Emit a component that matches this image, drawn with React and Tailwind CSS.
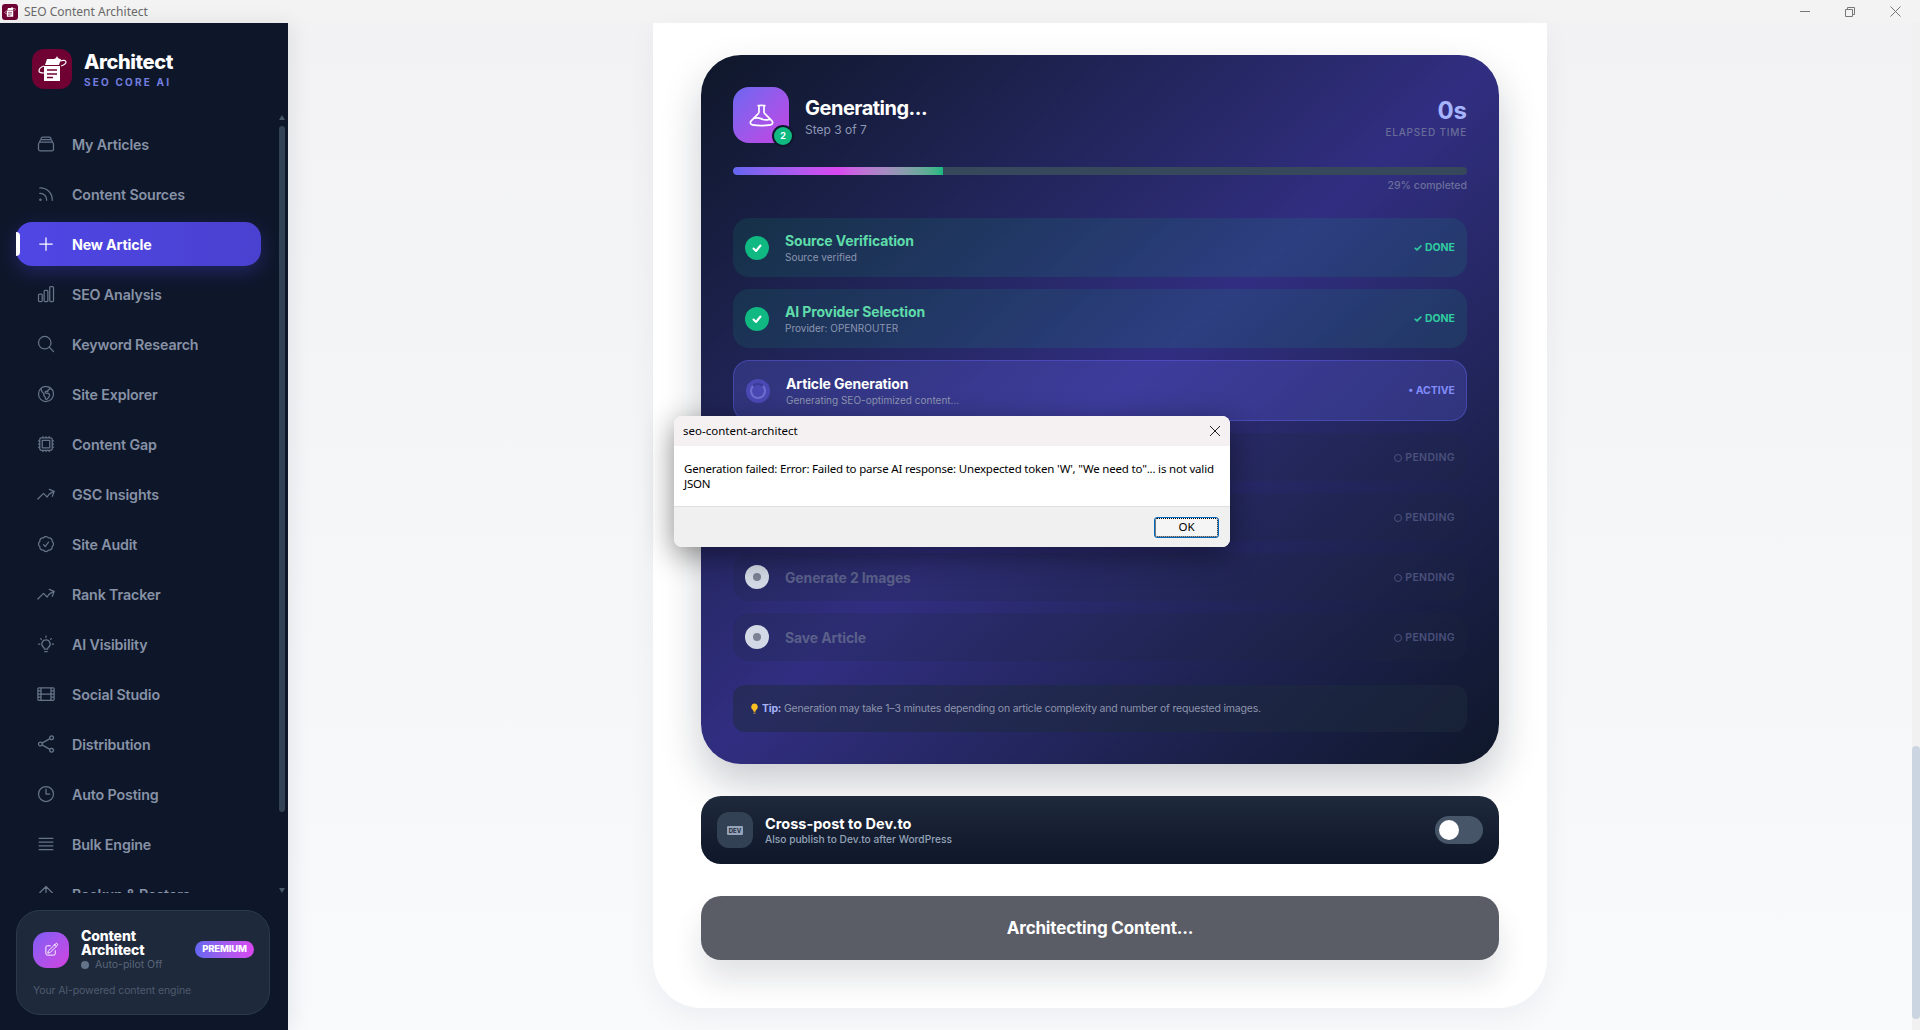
import React from 'react';
import {
  HiOutlineRectangleStack, HiOutlineRss, HiOutlinePlus, HiOutlineChartBar, HiOutlineMagnifyingGlass,
  HiOutlineGlobeAmericas, HiOutlineCpuChip, HiOutlineArrowTrendingUp, HiOutlineCheckBadge,
  HiOutlineFilm, HiOutlineShare, HiOutlineClock, HiOutlineBars4, HiOutlineArrowUp,
  HiOutlinePencilSquare, HiOutlineBeaker, HiMiniLightBulb,
} from 'react-icons/hi2';

const font = "font-['Inter','Liberation_Sans',sans-serif]";

function BulbRays({ className }) {
  return (
    <svg viewBox="0 0 24 24" className={className} fill="none" stroke="currentColor" strokeWidth="1.5" strokeLinecap="round" strokeLinejoin="round">
      <path d="M12 7a5 5 0 0 0-3 9c.7.6 1 1.200 1 2h4c0-.8.3-1.400 1-2a5 5 0 0 0-3-9z" />
      <path d="M10.500 21h3M12 2.500v1.500M4.500 12H3M21 12h-1.500M6.500 6.500l-1-1M17.500 6.500l1-1" />
    </svg>
  );
}

const navItems = [
  { label: 'My Articles', icon: HiOutlineRectangleStack },
  { label: 'Content Sources', icon: HiOutlineRss },
  { label: 'New Article', icon: HiOutlinePlus, active: true },
  { label: 'SEO Analysis', icon: HiOutlineChartBar },
  { label: 'Keyword Research', icon: HiOutlineMagnifyingGlass },
  { label: 'Site Explorer', icon: HiOutlineGlobeAmericas },
  { label: 'Content Gap', icon: HiOutlineCpuChip },
  { label: 'GSC Insights', icon: HiOutlineArrowTrendingUp },
  { label: 'Site Audit', icon: HiOutlineCheckBadge },
  { label: 'Rank Tracker', icon: HiOutlineArrowTrendingUp },
  { label: 'AI Visibility', icon: BulbRays },
  { label: 'Social Studio', icon: HiOutlineFilm },
  { label: 'Distribution', icon: HiOutlineShare },
  { label: 'Auto Posting', icon: HiOutlineClock },
  { label: 'Bulk Engine', icon: HiOutlineBars4 },
  { label: 'Backup & Restore', icon: HiOutlineArrowUp },
];

function LogoMark({ className }) {
  return (
    <div className={`flex items-center justify-center bg-[#6f0233] ${className}`}>
      <svg viewBox="0 0 40 40" className="w-full h-full" fill="none">
        <path d="M15 10h14l-2 6H13z" fill="#fff" />
        <path d="M12 17h16v15H12z" fill="#fff" />
        <path d="M15 21h10M15 25h10M15 28.5h6" stroke="#6f0233" strokeWidth="1.4" />
        <path d="M12 17c-3 1-5 3-5 5 0 1.5 2 2 5 2M28 12c3-1 6-1 6 1 0 1.500-2 3-5 4" stroke="#fff" strokeWidth="1.2" />
        <path d="M25 7l1 2 2 1-2 1-1 2-1-2-2-1 2-1z" fill="#fff" />
      </svg>
    </div>
  );
}

function NavLink({ item }) {
  const Icon = item.icon;
  return (
    <div
      className={`relative flex items-center h-11 w-[245px] shrink-0 rounded-2xl pl-5 gap-4 ${
        item.active
          ? 'bg-linear-to-r from-[#4f46e5] to-[#4a41d0] text-white shadow-[0_6px_18px_rgba(79,70,229,0.3)]'
          : 'text-[#8792a6]'
      }`}
    >
      {item.active && <span className="absolute left-0 top-[10px] h-6 w-1 rounded-r bg-white" />}
      <Icon className={`w-5 h-5 shrink-0 ${item.active ? 'text-white' : 'text-[#667388]'}`} />
      <span className={`pt-px text-[14.250px] tracking-[-0.01em] ${item.active ? 'font-bold' : 'font-semibold'}`}>{item.label}</span>
    </div>
  );
}

function Sidebar() {
  return (
    <aside className="w-[288px] shrink-0 flex flex-col bg-[#0e172a] shadow-[4px_0_20px_rgba(15,23,42,0.08)] z-10">
      <div className="h-[90px] shrink-0 pl-8 pt-[26px] flex items-start gap-3">
        <LogoMark className="w-10 h-10 rounded-xl overflow-hidden" />
        <div className="flex flex-col">
          <span className="text-[20px] leading-[26px] font-extrabold text-white tracking-[-0.02em]">Architect</span>
          <span className="text-[10px] leading-[14px] font-bold tracking-[0.22em] text-[#737ee0]">SEO CORE AI</span>
        </div>
      </div>

      <div className="relative flex-1 min-h-0 overflow-hidden">
        <nav className="flex flex-col gap-[6px] pl-4 pt-[9px]">
          {navItems.map((item) => (
            <NavLink key={item.label} item={item} />
          ))}
        </nav>
        {/* scrollbar */}
        <div className="absolute left-[279px] top-[2px] w-0 h-0 border-x-[3px] border-x-transparent border-b-[5px] border-b-[#475569]" />
        <div className="absolute left-[279px] top-[13px] h-[686px] w-[6px] rounded-full bg-[#334155]" />
        <div className="absolute left-[279px] top-[775px] w-0 h-0 border-x-[3px] border-x-transparent border-t-[5px] border-t-[#475569]" />
      </div>

      <div className="mt-[17px] mb-[15px] ml-4 w-[254px] h-[105px] rounded-3xl border border-[#2c3a4f] bg-[#1e293b] pl-4 pr-[15px] pt-4">
        <div className="flex items-center h-[45px]">
          <div className="w-9 h-9 shrink-0 rounded-[14px] bg-linear-to-br from-[#7c5cf6] to-[#d13fe0] flex items-center justify-center">
            <HiOutlinePencilSquare className="w-[15px] h-[15px] text-white" />
          </div>
          <div className="ml-3 pt-[2px] flex flex-col">
            <span className="text-[14px] leading-[14px] font-extrabold text-white tracking-[-0.01em]">
              Content
              <br />
              Architect
            </span>
            <span className="flex items-center gap-[6px] h-[15px] text-[10.500px] leading-[15px] text-[#596579]">
              <span className="w-2 h-2 rounded-full bg-[#64748b]" />
              Auto-pilot Off
            </span>
          </div>
          <span className="ml-auto flex items-center justify-center w-[59px] h-[17px] rounded-full bg-linear-to-r from-[#6366f1] to-[#d946ef] text-[9.500px] font-extrabold tracking-[-0.02em] text-white">
            PREMIUM
          </span>
        </div>
        <p className="mt-[11px] text-[10.500px] leading-4 text-[#4f5b6f] tracking-[-0.01em]">Your AI-powered content engine</p>
      </div>
    </aside>
  );
}

function StepIcon({ status }) {
  if (status === 'done') {
    return (
      <span className="w-6 h-6 shrink-0 rounded-full bg-[#10b981] flex items-center justify-center">
        <svg viewBox="0 0 12 12" className="w-3 h-3" fill="none" stroke="#fff" strokeWidth="2" strokeLinecap="round" strokeLinejoin="round">
          <path d="M2.500 6.500l2.500 2.500 4.500-5.500" />
        </svg>
      </span>
    );
  }
  if (status === 'active') {
    return (
      <span className="w-6 h-6 shrink-0 rounded-full bg-[#4a49b4] flex items-center justify-center">
        <span className="w-4 h-4 rounded-full border-2 border-[#6d6fd0] border-t-[#3b3a98]" />
      </span>
    );
  }
  return (
    <span className="w-6 h-6 shrink-0 rounded-full bg-[#d3dae5] flex items-center justify-center">
      <span className="w-2 h-2 rounded-full bg-[#7b8294]" />
    </span>
  );
}

function Step({ title, sub, status }) {
  const box = {
    done: 'bg-[#10b981]/12 py-3 pr-3',
    active: 'bg-[#6366f1]/25 border border-[#6366f1]/40 py-3 pr-[11px]',
    pending: 'bg-[#1e293b]/20 py-3 pr-3',
  }[status];
  const titleColor = { done: 'text-[#5fdcaa]', active: 'text-white', pending: 'text-[#5a6089] pt-px' }[status];
  return (
    <div className={`flex items-center gap-4 rounded-2xl pl-3 ${box}`}>
      <StepIcon status={status} />
      <div className="flex-1 flex flex-col">
        <span className={`text-[14px] leading-[21px] font-bold tracking-[-0.01em] ${titleColor}`}>{title}</span>
        {sub && <span className="-mt-px text-[10px] leading-[15px] text-[#8c95b0]">{sub}</span>}
      </div>
      {status === 'done' && <span className="text-[10.500px] font-bold text-[#2fcca0]">✓ DONE</span>}
      {status === 'active' && <span className="text-[10.500px] font-bold text-[#818cf8]">• ACTIVE</span>}
      {status === 'pending' && (
        <span className="flex items-center gap-[3px] pt-[2px] text-[10.500px] font-semibold text-[#4a507c] tracking-[0.03em]">
          <span className="w-2 h-2 rounded-full border border-[#4a507c]" />
          PENDING
        </span>
      )}
    </div>
  );
}

function GenerationCard() {
  return (
    <section className="rounded-[40px] p-8 bg-linear-to-br from-[#0f172a] via-[#312e81] to-[#0f172a] shadow-[0_20px_40px_rgba(15,23,42,0.22)]">
      <header className="flex items-start h-14">
        <div className="relative w-14 h-14 rounded-2xl bg-linear-to-br from-[#6a66f1] to-[#c43fe3] flex items-center justify-center">
          <HiOutlineBeaker className="w-[27px] h-[27px] text-white" />
          <span className="absolute left-[41px] top-[40px] w-[18px] h-[18px] rounded-full bg-[#10b981] ring-2 ring-[#10172d] flex items-center justify-center text-[9px] font-bold text-white">
            2
          </span>
        </div>
        <div className="ml-4 flex flex-col">
          <span className="text-[20px] leading-[26px] mt-2 font-bold text-white tracking-[-0.025em]">Generating...</span>
          <span className="text-[12px] leading-4 text-[#8e97b4] mt-[1px]">Step 3 of 7</span>
        </div>
        <div className="ml-auto flex flex-col items-end">
          <span className="text-[24px] leading-8 mt-2 font-bold text-[#a5b4fc]">0s</span>
          <span className="text-[10px] leading-[14px] -mt-[2px] font-medium tracking-[0.08em] text-[#6a6c98]">ELAPSED TIME</span>
        </div>
      </header>

      <div className="mt-6 h-2 rounded-full bg-[#37475c] overflow-hidden">
        <div className="h-full w-[28.57%] rounded-l-full bg-linear-to-r from-[#6366f1] via-[#d946ef] to-[#10b981]" />
      </div>
      <p className="mt-[3px] text-right text-[10.500px] leading-4 font-medium text-[#6b6f9b]">29% completed</p>

      <div className="mt-6 flex flex-col gap-3">
        <Step status="done" title="Source Verification" sub="Source verified" />
        <Step status="done" title="AI Provider Selection" sub="Provider: OPENROUTER" />
        <Step status="active" title="Article Generation" sub="Generating SEO-optimized content..." />
        <Step status="pending" title="" />
        <Step status="pending" title="" />
        <Step status="pending" title="Generate 2 Images" />
        <Step status="pending" title="Save Article" />
      </div>

      <div className="mt-6 h-[47px] rounded-xl bg-[#1e293b]/50 px-4 flex items-center gap-[2px] text-[10.500px] text-[#8d95ad] tracking-[-0.2px]">
        <HiMiniLightBulb className="w-[11px] h-[11px] text-[#fbbf24]" />
        <span>
          <span className="font-bold text-[#a5b4fc]">Tip:</span> Generation may take 1–3 minutes depending on article complexity and number of requested images.
        </span>
      </div>
    </section>
  );
}

function DevToCard() {
  return (
    <section className="mt-8 h-[68px] rounded-[20px] bg-linear-to-b from-[#1e293b] to-[#0f172a] px-4 flex items-center">
      <div className="w-9 h-9 rounded-xl bg-[#334155] flex items-center justify-center">
        <span className="w-4 h-[9px] rounded-[1px] bg-[#94a3b8] text-[6px] leading-[9px] text-center font-bold text-[#1e293b]">DEV</span>
      </div>
      <div className="ml-3 flex flex-col">
        <span className="text-[14.500px] leading-[18px] font-bold text-white">Cross-post to Dev.to</span>
        <span className="text-[10.200px] leading-[13px] font-medium text-[#94a3b8]">Also publish to Dev.to after WordPress</span>
      </div>
      <div className="ml-auto w-12 h-7 rounded-full bg-[#475569] flex items-center pl-1">
        <span className="w-5 h-5 rounded-full bg-white" />
      </div>
    </section>
  );
}

function ErrorDialog() {
  return (
    <div className="absolute left-[674px] top-[416px] w-[556px] h-[131px] rounded-lg bg-white overflow-hidden flex flex-col shadow-[0_8px_30px_rgba(0,0,0,0.45)] font-['Noto_Sans',sans-serif] text-[11.500px] text-black">
      <div className="h-[30px] shrink-0 bg-[#f5f1f3] flex items-center pl-[9px] pr-[9px] justify-between">
        <span>seo-content-architect</span>
        <svg viewBox="0 0 12 12" className="w-3 h-3" stroke="#222" strokeWidth="1">
          <path d="M1 1l10 10M11 1L1 11" />
        </svg>
      </div>
      <div className="h-[60px] shrink-0 pl-[10px] pr-2 pt-[15px] leading-[15px] tracking-[-0.19px]">
        Generation failed: Error: Failed to parse AI response: Unexpected token 'W', "We need to"... is not valid JSON
      </div>
      <div className="flex-1 bg-[#f0f0f0] border-t border-[#dfdfdf] flex items-center justify-end pr-[11px]">
        <button className="w-[65px] h-[21px] rounded-[3px] bg-[#f5f5f5] border border-[#0067c0] outline-1 outline-dotted outline-black -outline-offset-2 leading-none">
          OK
        </button>
      </div>
    </div>
  );
}

export default function App() {
  return (
    <div className={`relative h-[1030px] w-[1920px] overflow-hidden flex flex-col ${font}`}>
      <div className="h-[23px] shrink-0 bg-[#f3f3f3] flex items-center pl-[2px]">
        <LogoMark className="w-4 h-4 rounded-[3px] overflow-hidden" />
        <span className="ml-[6px] text-[12px] text-[#6a6a6a] font-['Noto_Sans',sans-serif]">SEO Content Architect</span>
        <div className="ml-auto flex items-center gap-[35px] pr-[19px] text-[#777]">
          <span className="w-[10px] h-px bg-[#777]" />
          <svg viewBox="0 0 10 10" className="w-[10px] h-[10px]" fill="none" stroke="#777" strokeWidth="1">
            <path d="M0.500 2.500h7v7h-7zM2.500 2.500v-2h7v7h-2" />
          </svg>
          <svg viewBox="0 0 11 11" className="w-[11px] h-[11px]" stroke="#777" strokeWidth="1">
            <path d="M0.500 0.500l10 10M10.500 0.500l-10 10" />
          </svg>
        </div>
      </div>

      <div className="flex flex-1 min-h-0">
        <Sidebar />
        <main className="flex-1 min-w-0 flex justify-center bg-linear-to-b from-[#f2f2f4] to-[#f8fafc]">
          <div className="w-[894px] h-[985px] rounded-b-[48px] bg-white px-12 pt-8 shadow-[0_10px_30px_rgba(15,23,42,0.05)]">
            <GenerationCard />
            <DevToCard />
            <button className="mt-8 w-full h-16 pt-px rounded-[20px] bg-[#5a5c66] text-white text-[17px] font-bold tracking-[-0.01em] shadow-[0_20px_30px_rgba(15,23,42,0.12)]">
              Architecting Content...
            </button>
          </div>
        </main>
        <div className="relative w-2 shrink-0 bg-[#f1f1f1]">
          <div className="absolute left-0 top-[723px] h-[273px] w-2 rounded-full bg-[#cbd5e1]" />
        </div>
      </div>

      <ErrorDialog />
    </div>
  );
}
